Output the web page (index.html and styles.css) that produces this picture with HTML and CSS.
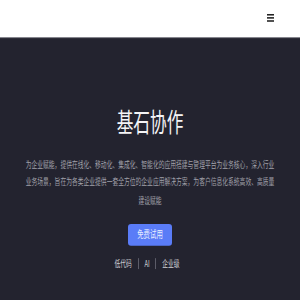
FILE: index.html
```html
<!DOCTYPE html>
<html lang="zh-CN">
<head>
<meta charset="utf-8">
<title>基石协作</title>
<link rel="stylesheet" href="styles.css">
</head>
<body>
<div class="page">
  <header class="topbar">
    <button class="menu" aria-label="菜单"><span></span><span></span><span></span></button>
  </header>
  <main class="hero">
    <h1 class="title">基石协作</h1>
    <p class="desc">为企业赋能，提供在线化、移动化、集成化、智能化的应用搭建与管理平台为业务核心，深入行业业务场景，旨在为各类企业提供一套全方位的企业应用解决方案，为客户信息化系统高效、高质量建设赋能</p>
    <a class="cta" href="#">免费试用</a>
    <ul class="tags">
      <li>低代码</li>
      <li class="sep"></li>
      <li>AI</li>
      <li class="sep"></li>
      <li>企业级</li>
    </ul>
  </main>
</div>
</body>
</html>
```

FILE: styles.css
```css
html {
  overflow: hidden;
  background: #23232f;
}
body {
  margin: 0;
  padding: 0;
  min-height: 300px;
  background: #23232f;
}
.page {
  width: 300px;
  transform: scaleY(1.5552);
  transform-origin: 0 0;
  font-family: "Noto Sans CJK SC", "Noto Sans", sans-serif;
}
.topbar {
  height: 24.43px;
  background: #ffffff;
  box-shadow: 0 0.643px 0 #4a4a56;
  display: flex;
  align-items: center;
  justify-content: flex-end;
  padding-right: 25.7px;
}
.menu {
  width: 7.7px;
  padding: 0;
  margin: 0 0 1.3px 0;
  border: 0;
  background: transparent;
  display: flex;
  flex-direction: column;
  gap: 0.965px;
}
.menu span {
  display: block;
  height: 1.286px;
  background: #222;
}
.hero {
  min-height: 168px;
  margin-top: 0.643px;
  background: #23232f;
  display: flex;
  flex-direction: column;
  align-items: center;
  padding-top: 41.8px;
  box-sizing: border-box;
}
.title {
  margin: 0;
  font-size: 16.7px;
  line-height: 23.15px;
  font-weight: 400;
  color: #f4f4f6;
}
.desc {
  margin: 10.2px 0 0 0;
  width: 252px;
  font-size: 5.79px;
  line-height: 11.25px;
  color: #a0a0aa;
  text-align: center;
}
.cta {
  margin-top: 9.6px;
  width: 43.7px;
  height: 14.15px;
  display: flex;
  align-items: center;
  justify-content: center;
  background: #5a7cf7;
  color: #e8edff;
  border-radius: 3px / 1.93px;
  font-size: 6.43px;
  text-decoration: none;
}
.tags {
  list-style: none;
  margin: 7.07px 0 0 0;
  padding: 0 6px 0 0;
  display: flex;
  align-items: center;
  gap: 5.8px;
  font-size: 5.79px;
  line-height: 9px;
  color: #d0d0d6;
}
.tags .sep {
  width: 1px;
  height: 7px;
  background: #5c5c68;
}
```
